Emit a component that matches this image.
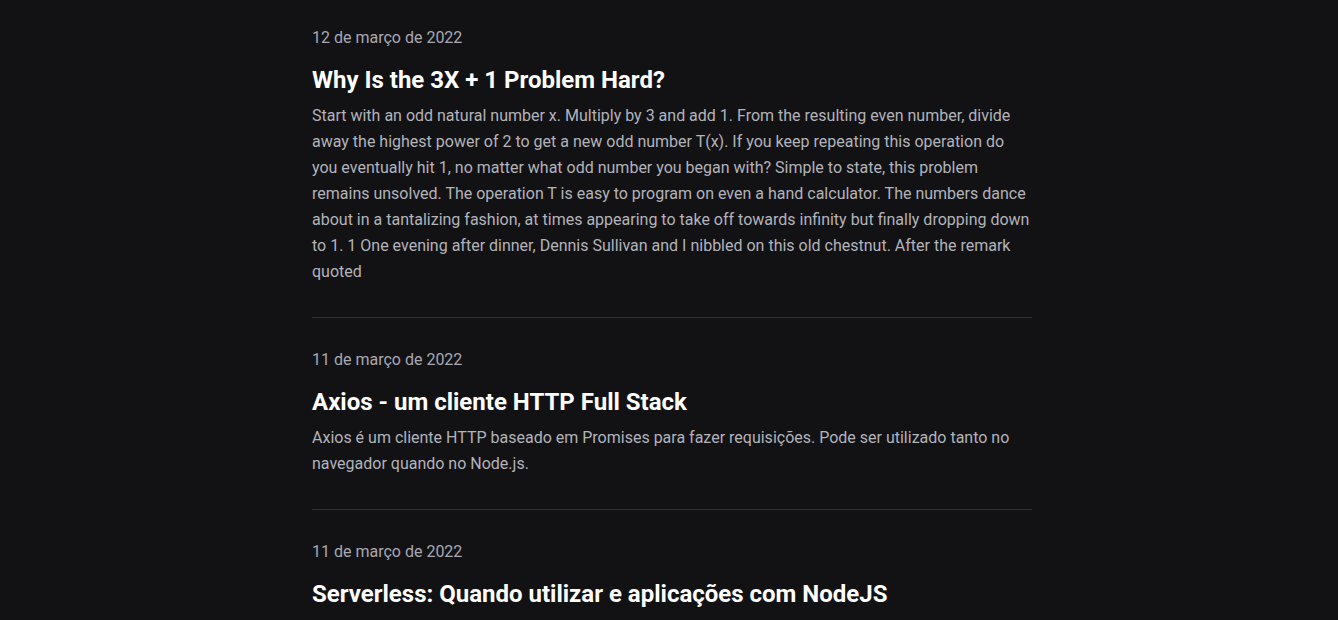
import React from "react";

type Post = { date: string; title: string; body: string };

const posts: Post[] = [
  {
    date: "12 de março de 2022",
    title: "Why Is the 3X + 1 Problem Hard?",
    body:
      "Start with an odd natural number x. Multiply by 3 and add 1. From the resulting even number, divide away the highest power of 2 to get a new odd number T(x). If you keep repeating this operation do you eventually hit 1, no matter what odd number you began with? Simple to state, this problem remains unsolved. The operation T is easy to program on even a hand calculator. The numbers dance about in a tantalizing fashion, at times appearing to take off towards infinity but finally dropping down to 1. 1 One evening after dinner, Dennis Sullivan and I nibbled on this old chestnut. After the remark quoted",
  },
  {
    date: "11 de março de 2022",
    title: "Axios - um cliente HTTP Full Stack",
    body:
      "Axios é um cliente HTTP baseado em Promises para fazer requisições. Pode ser utilizado tanto no navegador quando no Node.js.",
  },
  {
    date: "11 de março de 2022",
    title: "Serverless: Quando utilizar e aplicações com NodeJS",
    body:
      "Serverless é um modelo de execução em que o provedor de nuvem é responsável por executar um trecho de código.",
  },
];

export default function App() {
  return (
    <div
      className="min-h-screen w-full bg-[#121214] pl-[6px]"
      style={{ fontFamily: "Roboto, 'Noto Sans', sans-serif" }}
    >
      <main className="mx-auto w-[720px] divide-y divide-[#323238]">
        {posts.map((p, i) => (
          <article
            key={i}
            className={i === 0 ? "pt-[28px] pb-[32px]" : "pt-[32px] pb-[32px]"}
          >
            <time className="block text-[16px] leading-[20px] text-[#a8a8b3]">
              {p.date}
            </time>
            <h2 className="mt-[16px] text-[24px] font-bold leading-[32px] text-white">
              {p.title}
            </h2>
            <p className="mt-[7px] text-[16px] leading-[26px] text-[#b3b3bb]">
              {p.body}
            </p>
          </article>
        ))}
      </main>
    </div>
  );
}
